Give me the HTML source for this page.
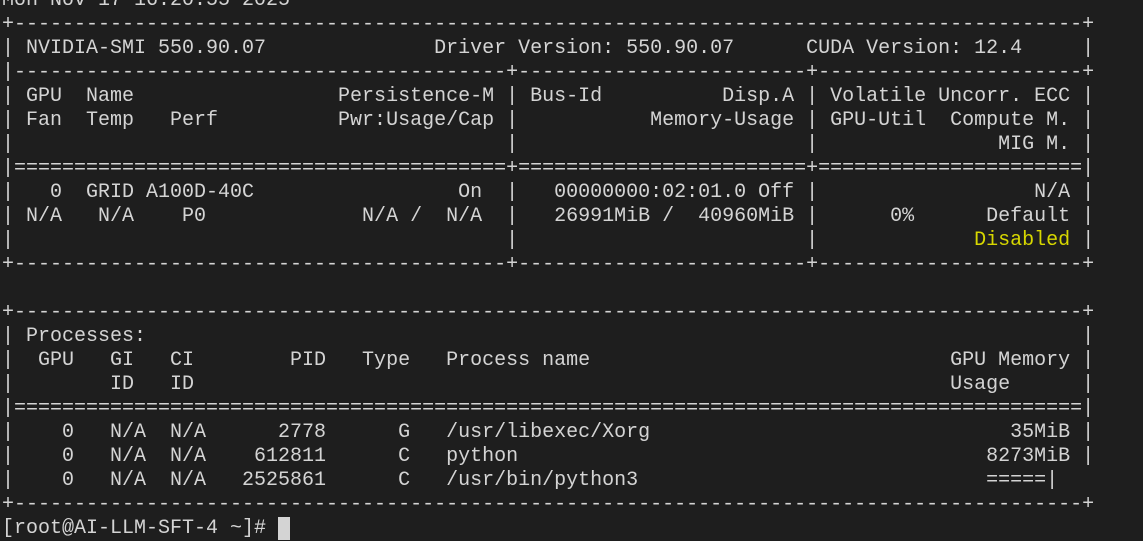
<!DOCTYPE html>
<html><head><meta charset="utf-8"><style>
html,body{margin:0;padding:0;background:#1e1e1e;width:1143px;height:525px;overflow:hidden}
pre{position:absolute;left:2px;top:-11px;margin:0;font-family:"Liberation Mono",monospace;font-size:20px;line-height:24px;color:#d4d4d4;white-space:pre}
.y{color:#d7d700}
.cur{background:#d4d4d4}
</style></head><body><pre>Mon Nov 17 16:20:55 2025
+-----------------------------------------------------------------------------------------+
| NVIDIA-SMI 550.90.07              Driver Version: 550.90.07      CUDA Version: 12.4     |
|-----------------------------------------+------------------------+----------------------+
| GPU  Name                 Persistence-M | Bus-Id          Disp.A | Volatile Uncorr. ECC |
| Fan  Temp   Perf          Pwr:Usage/Cap |           Memory-Usage | GPU-Util  Compute M. |
|                                         |                        |               MIG M. |
|=========================================+========================+======================|
|   0  GRID A100D-40C                 On  |   00000000:02:01.0 Off |                  N/A |
| N/A   N/A    P0             N/A /  N/A  |   26991MiB /  40960MiB |      0%      Default |
|                                         |                        |             <span class="y">Disabled</span> |
+-----------------------------------------+------------------------+----------------------+

+-----------------------------------------------------------------------------------------+
| Processes:                                                                              |
|  GPU   GI   CI        PID   Type   Process name                              GPU Memory |
|        ID   ID                                                               Usage      |
|=========================================================================================|
|    0   N/A  N/A      2778      G   /usr/libexec/Xorg                              35MiB |
|    0   N/A  N/A    612811      C   python                                       8273MiB |
|    0   N/A  N/A   2525861      C   /usr/bin/python3                             =====|
+-----------------------------------------------------------------------------------------+
[root@AI-LLM-SFT-4 ~]# <span class="cur"> </span></pre></body></html>
